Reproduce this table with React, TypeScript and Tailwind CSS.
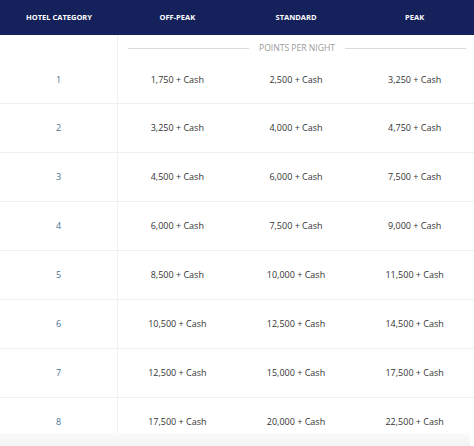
import React from "react";

const rows: [string, string, string, string][] = [
  ["1", "1,750 + Cash", "2,500 + Cash", "3,250 + Cash"],
  ["2", "3,250 + Cash", "4,000 + Cash", "4,750 + Cash"],
  ["3", "4,500 + Cash", "6,000 + Cash", "7,500 + Cash"],
  ["4", "6,000 + Cash", "7,500 + Cash", "9,000 + Cash"],
  ["5", "8,500 + Cash", "10,000 + Cash", "11,500 + Cash"],
  ["6", "10,500 + Cash", "12,500 + Cash", "14,500 + Cash"],
  ["7", "12,500 + Cash", "15,000 + Cash", "17,500 + Cash"],
  ["8", "17,500 + Cash", "20,000 + Cash", "22,500 + Cash"],
];

export default function App() {
  return (
    <div
      className="w-[474px] h-[446px] overflow-hidden bg-white relative"
      style={{ fontFamily: '"Open Sans", "Noto Sans", sans-serif' }}
    >
      <div className="grid grid-cols-[118px_1fr_1fr_1fr] h-[35px] bg-[#14215a] text-white text-[7.5px] font-bold uppercase items-center">
        <div className="text-center">Hotel Category</div>
        <div className="text-center">Off-Peak</div>
        <div className="text-center">Standard</div>
        <div className="text-center">Peak</div>
      </div>
      <div className="grid grid-cols-[118px_1fr] h-[27px]">
        <div className="border-r border-[#f0f0f0]" />
        <div className="flex items-center pl-[10px] pr-[8px] gap-[10px]">
          <div className="flex-1 h-px bg-[#dcdcdc]" />
          <div className="text-[8.6px] text-[#9a9a9a]">POINTS PER NIGHT</div>
          <div className="flex-1 h-px bg-[#dcdcdc]" />
        </div>
      </div>
      {rows.map((r, i) => {
        const cell = `self-stretch flex items-center justify-center ${i === 0 ? "pb-[6px]" : ""}`;
        return (
          <div
            key={i}
            className={`grid grid-cols-[118px_1fr_1fr_1fr] border-b border-[#efefef] text-[9px] ${
              i === 0 ? "h-[42px]" : "h-[49px]"
            }`}
          >
            <div className={`${cell} text-[#47718f] border-r border-[#f0f0f0]`}>{r[0]}</div>
            <div className={`${cell} text-[#333333]`}>{r[1]}</div>
            <div className={`${cell} text-[#333333]`}>{r[2]}</div>
            <div className={`${cell} text-[#333333]`}>{r[3]}</div>
          </div>
        );
      })}
      <div className="absolute left-0 right-[4px] bottom-0 h-[13px] bg-gradient-to-b from-[#fbfbfb] to-[#f3f3f3]" />
    </div>
  );
}
